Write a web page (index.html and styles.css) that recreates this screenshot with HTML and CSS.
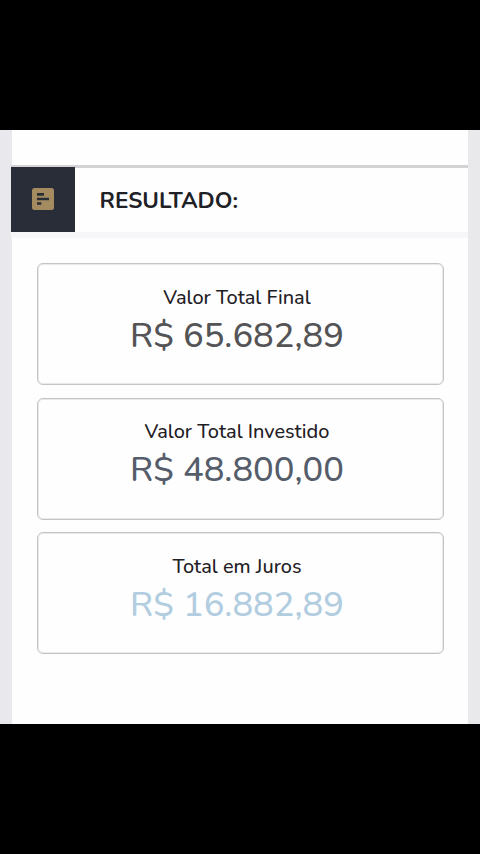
FILE: index.html
```html
<!DOCTYPE html>
<html lang="pt-BR">
<head>
<meta charset="utf-8">
<title>Resultado</title>
<link rel="stylesheet" href="styles.css">
</head>
<body>
<main class="screen">
  <section class="page">
    <div class="spacer"></div>
    <header class="heading">
      <div class="heading-icon">
        <svg width="22" height="22" viewBox="0 0 22 22">
          <rect width="22" height="22" rx="2.5" fill="#a48c60"/>
          <path d="M5 5h7v2.7H5zM5 9.7h12v2.5H5zM5 14.2h4.3v2.6H5z" fill="#292d38"/>
        </svg>
      </div>
      <h1 class="heading-title">RESULTADO:</h1>
    </header>
    <div class="results">
      <article class="card">
        <p class="label">Valor Total Final</p>
        <p class="value value-final">R$ 65.682,89</p>
      </article>
      <article class="card card-invested">
        <p class="label">Valor Total Investido</p>
        <p class="value value-invested">R$ 48.800,00</p>
      </article>
      <article class="card">
        <p class="label">Total em Juros</p>
        <p class="value value-interest">R$ 16.882,89</p>
      </article>
    </div>
  </section>
</main>
</body>
</html>
```
FILE: styles.css
```css
* { box-sizing: border-box; margin: 0; }
body { background: #000; }
.screen {
  height: 854px;
  padding: 130px 0;
  background: #000;
  font-family: Nunito, "Noto Sans", sans-serif;
}
.page {
  height: 594px;
  padding: 0 11px;
  background: linear-gradient(90deg, #e9e8ed 12px, #fefefe 12px, #fefefe 468px, #e9e8eb 468px);
}
.spacer { height: 38px; margin-right: 1px; border-bottom: 3px solid #d3d3d5; }
.heading {
  display: flex;
  height: 70px;
  margin-right: 1px;
  border-bottom: 6px solid #f6f6f8;
}
.heading-icon {
  display: flex;
  align-items: center;
  justify-content: center;
  width: 64px;
  height: 65px;
  margin-top: -1px;
  padding: 0 1px 1px 0;
  background: #292d38;
}
.heading-title {
  margin-left: 24.5px;
  color: #202126;
  font-size: 22.5px;
  font-weight: 700;
  line-height: 65px;
}
.results {
  display: flex;
  flex-direction: column;
  gap: 12.5px;
  padding: 25px 25px 0 26px;
}
.card {
  height: 122px;
  padding: 20px 7px 0 0;
  border: 1px solid #c4c4c8;
  border-radius: 6px;
  background: #fefefe;
  box-shadow: inset 0 0 0 1px #e9e9eb;
  text-align: center;
}
.card-invested { padding-top: 19.4px; }
.label { color: #1f2025; font-size: 19.9px; font-weight: 500; line-height: 28px; }
.value { font-size: 34.5px; font-weight: 500; line-height: 48px; }
.value-final { color: #545456; }
.value-invested { color: #555d6b; }
.value-interest { color: #b2cde0; }
```
